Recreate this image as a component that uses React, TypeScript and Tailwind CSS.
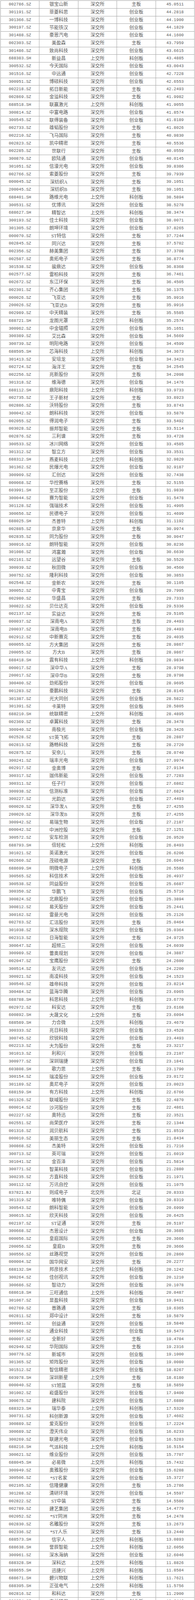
const raw = `002786.SZ 银宝山新 45.0511
301191.SZ 菲菱科思 44.2818
301366.SZ 一博科技 44.1900
300197.SZ 节能铁汉 44.1829
301488.SZ 豪恩汽电 44.1600
002303.SZ 美盈森 43.7959
301486.SZ 致尚科技 43.6615
688383.SH 新益昌 43.4885
300532.SZ 今天国际 43.0043
301516.SZ 中远通 42.7228
300951.SZ 博硕科技 42.6553
002218.SZ 拓日新能 42.2493
002869.SZ 金溢科技 41.9982
688518.SH 联赢激光 41.9055
300814.SZ 中富电路 41.8574
300545.SZ 联得装备 41.8189
002733.SZ 雄韬股份 41.8026
002210.SZ 飞马国际 40.9830
002823.SZ 凯中精密 40.5536
002285.SZ 世联行 40.0559
300870.SZ 欧陆通 40.0145
301051.SZ 信濠光电 39.8386
002766.SZ 索菱股份 39.7939
000045.SZ 深纺织A 39.1051
200045.SZ 深纺织B 39.1051
688401.SH 路维光电 38.5894
300531.SZ 优博讯 38.5278
688627.SH 精智达 38.3474
300193.SZ 佳士科技 38.0071
301305.SZ 朗坤环境 37.8265
000070.SZ ST特信 37.7244
002845.SZ 同兴达 37.5702
002356.SZ 赫美集团 37.3708
002587.SZ 奥拓电子 36.8774
301538.SZ 骏鼎达 36.8368
002577.SZ 雷柏科技 36.7461
002672.SZ 东江环保 36.4505
002301.SZ 齐心集团 36.1375
000026.SZ 飞亚达 35.9916
200026.SZ 飞亚达B 35.9916
002989.SZ 中天精装 35.5585
688721.SH 龙图光罩 35.2574
300962.SZ 中金辐照 35.1651
300389.SZ 艾比森 34.5669
300739.SZ 明阳电路 34.4599
688595.SH 芯海科技 34.3673
301413.SZ 安培龙 34.3423
002724.SZ 海洋王 34.2545
002256.SZ 兆新股份 34.2098
301318.SZ 维海德 34.1476
688112.SH 鼎阳科技 33.9733
002735.SZ 王子新材 33.8923
002886.SZ 沃特股份 33.8743
300042.SZ 朗科科技 33.5870
002055.SZ 得润电子 33.5492
003028.SZ 振邦智能 33.5114
002876.SZ 三利谱 33.4728
300533.SZ 冰川网络 33.4585
301312.SZ 智立方 33.3531
688312.SH 燕麦科技 32.9820
301362.SZ 民爆光电 32.9187
300909.SZ 汇创达 32.7438
000068.SZ 华控赛格 32.5155
603991.SH 至正股份 31.9830
300044.SZ 赛为智能 31.5478
301128.SZ 强瑞技术 31.4905
300656.SZ 民德电子 31.4699
688025.SH 杰普特 31.1192
002885.SZ 京泉华 30.9974
002835.SZ 同为股份 30.9047
300916.SZ 朗特智能 30.8236
301086.SZ 鸿富瀚 30.6630
002161.SZ 远望谷 30.5520
300939.SZ 秋田微 30.4560
300752.SZ 隆利科技 30.3853
002548.SZ 金新农 30.1105
300052.SZ 中青宝 29.7995
002980.SZ 华盛昌 29.7333
300822.SZ 贝仕达克 29.5336
002137.SZ 实益达 29.5105
000037.SZ 深南电A 29.4493
200037.SZ 深南电B 29.4493
002912.SZ 中新赛克 29.4035
000055.SZ 方大集团 28.9867
200055.SZ 方大B 28.9867
688418.SH 震有科技 28.9834
000017.SZ 深中华A 28.9798
200017.SZ 深中华B 28.9798
300400.SZ 劲拓股份 28.9695
001283.SZ 豪鹏科技 28.8145
301387.SZ 光大同创 28.5822
301391.SZ 卡莱特 28.5805
688210.SH 统联精密 28.4895
002369.SZ 卓翼科技 28.3478
300940.SZ 南极光 28.3426
002528.SZ ST英飞拓 28.2887
002813.SZ 路畅科技 28.2720
002875.SZ 安奈儿 28.0740
300241.SZ 瑞丰光电 27.9974
002917.SZ 金奥博 27.9134
300317.SZ 珈伟新能 27.7283
300311.SZ 任子行 27.6862
300938.SZ 信测标准 27.6824
300227.SZ 光韵达 27.4493
000020.SZ 深华发A 27.4255
200020.SZ 深华发B 27.4255
300942.SZ 易瑞生物 27.2187
000042.SZ 中洲控股 27.1251
300572.SZ 安车检测 26.9520
688793.SH 倍轻松 26.8493
301021.SZ 英诺激光 26.6206
002660.SZ 茂硕电源 26.6043
688699.SH 明微电子 26.5586
300565.SZ 科信技术 26.4937
300538.SZ 同益股份 25.6687
300350.SZ 华鹏飞 25.5716
300824.SZ 北鼎股份 25.3894
300812.SZ 易天股份 25.2441
300162.SZ 雷曼光电 25.2126
002763.SZ 汇洁股份 25.0464
301038.SZ 深水规院 25.0364
002313.SZ 日海智能 24.9725
300647.SZ 超频三 24.6039
300989.SZ 蕾奥规划 24.3887
002047.SZ 宝鹰股份 24.2600
300514.SZ 友讯达 24.2200
300921.SZ 南凌科技 24.1523
300546.SZ 雄帝科技 23.8214
300484.SZ 蓝海华腾 23.6965
688788.SH 科思科技 23.6770
002972.SZ 科安达 23.6168
600892.SH 大晟文化 23.6094
688589.SH 力合微 23.4679
300333.SZ 兆日科技 23.4528
300745.SZ 欣锐科技 23.4493
002213.SZ 大为股份 23.3217
301013.SZ 利和兴 23.2107
300977.SZ 深圳瑞捷 23.1841
603808.SH 歌力思 23.1790
300154.SZ 瑞凌股份 23.0172
301189.SZ 奥尼电子 23.0023
688159.SH 有方科技 22.6766
001326.SZ 联域股份 22.4870
000014.SZ 沙河股份 22.4861
002227.SZ 奥特迅 22.3521
002551.SZ 尚荣医疗 22.1344
001316.SZ 润贝航科 21.8519
000010.SZ 美丽生态 21.8434
300868.SZ 杰美特 21.7216
300713.SZ 英可瑞 21.6019
301041.SZ 金百泽 21.5814
300771.SZ 智莱科技 21.2880
300235.SZ 方直科技 21.1971
300112.SZ 万讯自控 21.1075
837821.BJ 则成电子 20.8333
301319.SZ 唯特偶 20.8319
300543.SZ 朗科智能 20.6999
300615.SZ 欣天科技 20.6425
002197.SZ ST证通 20.5197
300668.SZ 杰恩设计 20.3685
000056.SZ 皇庭国际 20.3666
200056.SZ 皇庭B 20.3666
300556.SZ 丝路视觉 20.2860
000004.SZ 国华网安 20.2277
688132.SH 邦彦技术 20.1242
300264.SZ 佳创视讯 20.1210
300686.SZ 智动力 20.1078
688618.SH 三旺通信 20.0487
301067.SZ 显盈科技 19.9431
002769.SZ 普路通 19.6365
002811.SZ 郑中设计 19.5879
300991.SZ 创益通 19.5840
300960.SZ 通业科技 19.5473
000007.SZ 全新好 19.4704
002949.SZ 华阳国际 19.2316
300778.SZ 新城市 19.1000
301365.SZ 矩阵股份 19.0080
301512.SZ 智信精密 18.8267
603978.SH 深圳新星 18.6180
000040.SZ ST旭蓝 18.5859
301002.SZ 崧盛股份 17.9400
300675.SZ 建科院 17.6880
688323.SH 瑞华泰 17.5320
300731.SZ 科创新源 17.4602
300889.SZ 爱克股份 17.2224
300689.SZ 澄天伟业 16.6233
300269.SZ 联建光电 16.5283
688216.SH 气派科技 16.5154
300621.SZ 维业股份 15.7707
688045.SH 必易微 15.7432
300949.SZ 奥雅股份 15.6288
300506.SZ *ST名家 15.3727
002105.SZ 信隆健康 15.2786
301288.SZ 清研环境 14.5597
002822.SZ ST中装 14.5586
002789.SZ 建艺集团 14.4779
002052.SZ *ST同洲 14.2478
002830.SZ 名雕股份 13.2673
002336.SZ *ST人乐 13.2440
688573.SH 信宇人 13.0893
688638.SH 誉辰智能 12.6056
300961.SZ 深水海纳 12.6046
688328.SH 深科达 11.8826
688655.SH 迅捷兴 11.8584
688671.SH 碧兴物联 11.7621
688395.SH 正弦电气 11.5756
002816.SZ 和科达 11.2900
300854.SZ 中兰环保 10.6446
002620.SZ 瑞和股份 10.2301
002856.SZ 美芝股份 10.0402
300301.SZ *ST长方 9.8764
872374.BJ 云里物里 9.2931
832469.BJ 富恒新材 8.7809
002289.SZ ST宇顺 8.7719
839680.BJ 广道数字 7.0216
833075.BJ 柏星龙 7.0195
832876.BJ 慧为智能 6.3603
831167.BJ 鑫汇科 5.8530
300167.SZ *ST迪威 5.8409
834765.BJ 美之高 4.2325`;

type Row = { code: string; name: string; market: string; board: string; value: string };

function parse(): Row[] {
  return raw.split("\n").map((line) => {
    const [code, name, value] = line.trim().split(" ");
    const suffix = code.slice(7);
    let market = "深交所";
    let board = "主板";
    if (suffix === "SH") {
      market = "上交所";
      board = code.startsWith("688") ? "科创板" : "主板";
    } else if (suffix === "BJ") {
      market = "北交所";
      board = "北证";
    } else if (code.startsWith("300") || code.startsWith("301")) {
      board = "创业板";
    }
    return { code, name, market, board, value };
  });
}

const rows = parse();

const cell = "flex flex-1 items-center justify-center border-r border-[#a3a3a3]";
const mono = "font-['Liberation_Mono',monospace] text-[10.5px] tracking-[0.1px]";
const cjk = "font-['Liberation_Serif','Noto_Sans_CJK_SC',serif] text-[12px]";

export default function App() {
  return (
    <div className="h-[4347px] w-[500px] bg-white pt-[1px]">
      <div className="ml-[1px] flex h-[4345px] w-[498px] flex-col border-l border-t border-[#a3a3a3] text-[#5a5a5a]">
        {rows.map((r) => (
          <div key={r.code} className="flex min-h-0 flex-1 border-b border-[#a3a3a3] leading-none">
            <div className={`${cell} ${mono}`}>{r.code}</div>
            <div className={`${cell} ${cjk}`}>{r.name}</div>
            <div className={`${cell} ${cjk}`}>{r.market}</div>
            <div className={`${cell} ${cjk}`}>{r.board}</div>
            <div className={`${cell} ${mono}`}>{r.value}</div>
          </div>
        ))}
      </div>
    </div>
  );
}
